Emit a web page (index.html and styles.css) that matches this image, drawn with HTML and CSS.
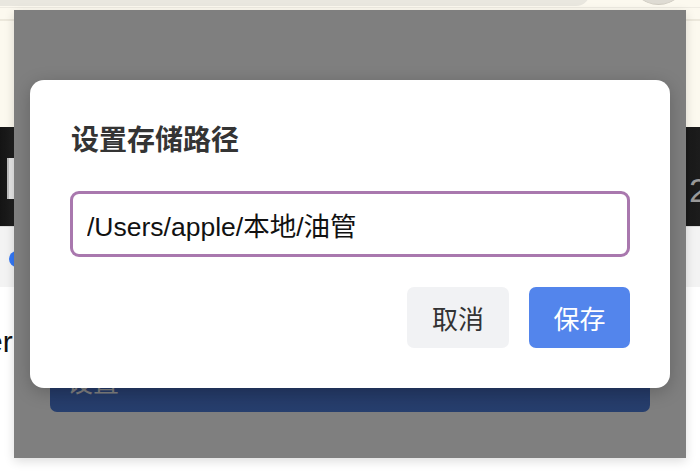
FILE: index.html
```html
<!DOCTYPE html>
<html lang="zh-CN">
<head>
<meta charset="utf-8">
<title>设置存储路径</title>
<link rel="stylesheet" href="styles.css">
</head>
<body>
<div class="page">
  <div class="chrome">
    <div class="urlbar"></div>
    <div class="round-btn"></div>
  </div>
  <div class="nav"><div class="nav-line"></div></div>
  <div class="hero">
    <div class="hero-chip"></div>
    <div class="hero-num">2</div>
  </div>
  <div class="tabs"><span class="tab-dot"></span></div>
  <div class="content"><span class="content-text">er</span></div>
</div>

<div class="window">
  <div class="window-body">
    <button class="primary-wide">设置</button>
  </div>
  <div class="overlay">
    <div class="dialog">
      <h2 class="dialog-title">设置存储路径</h2>
      <input class="path-input" type="text" value="/Users/apple/本地/油管">
      <div class="dialog-actions">
        <button class="btn btn-cancel">取消</button>
        <button class="btn btn-save">保存</button>
      </div>
    </div>
  </div>
</div>
</body>
</html>
```

FILE: styles.css
```css
* { box-sizing: border-box; }

html, body {
  margin: 0;
  padding: 0;
  width: 700px;
  height: 476px;
  overflow: hidden;
  background: #ffffff;
  font-family: "Liberation Sans", "Noto Sans CJK SC", sans-serif;
}

.page {
  display: flex;
  flex-direction: column;
  height: 476px;
}

.chrome {
  height: 8px;
  display: flex;
  align-items: flex-end;
  background: #fcf9ef;
  overflow: hidden;
  border-bottom: 1px solid #eeebe2;
}

.urlbar {
  width: 590px;
  height: 30px;
  background: #e9e7df;
  border-radius: 0 0 14px 0;
  align-self: flex-end;
  margin-bottom: 1px;
}

.round-btn {
  width: 57px;
  height: 57px;
  border-radius: 50%;
  background: #dedbd3;
  border-bottom: 1px solid #cfcbc1;
  margin-left: 40px;
  margin-bottom: 2px;
  flex: none;
}

.nav {
  height: 119px;
  background: #fcf9ef;
  padding-top: 11px;
}

.nav-line {
  height: 2px;
  background: #ece8dc;
}

.hero {
  height: 99px;
  background: linear-gradient(90deg, #141414, #262626 3%, #1a1a1a 6%, #151515 94%, #1c1c1c);
  display: flex;
  justify-content: space-between;
  align-items: center;
}

.hero-chip {
  width: 7px;
  height: 41px;
  margin-left: 7px;
  margin-top: 4px;
  background: #e4e4e4;
  border-left: 2px solid #bdbdbd;
}

.hero-num {
  color: #9a9a9a;
  font-size: 34px;
  line-height: 40px;
  margin-right: -8px;
  margin-top: 26px;
}

.tabs {
  height: 61px;
  background: #f3f3f3;
  padding-top: 24px;
  border-top: 1px solid #dcdcdc;
}

.tab-dot {
  display: block;
  width: 16px;
  height: 16px;
  border-radius: 50%;
  background: #3478f6;
  margin-left: 9px;
}

.content {
  flex: 1;
  background: #ffffff;
  padding-top: 38px;
}

.content-text {
  display: block;
  font-size: 30px;
  color: #111;
  margin-left: -14px;
}

.window {
  position: absolute;
  left: 14px;
  top: 10px;
  width: 672px;
  height: 448px;
  background: #ffffff;
  box-shadow: 0 3px 10px rgba(0, 0, 0, 0.14);
}

.window-body {
  height: 100%;
  display: flex;
  flex-direction: column;
  justify-content: flex-end;
  padding: 0 36px 46px;
}

.primary-wide {
  height: 64px;
  width: 100%;
  border: none;
  border-radius: 7px;
  background: linear-gradient(180deg, #4262b6, #4e7edc);
  color: #ffffff;
  font-family: "Noto Sans CJK SC", sans-serif;
  font-size: 26px;
  text-align: left;
  padding: 0 0 0 17px;
}

.overlay {
  position: absolute;
  inset: 0;
  background: rgba(0, 0, 0, 0.5);
  display: flex;
  align-items: center;
  justify-content: center;
}

.dialog {
  width: 640px;
  height: 308px;
  background: #ffffff;
  border-radius: 14px;
  padding: 40px;
  box-shadow: 0 4px 18px rgba(0, 0, 0, 0.22);
  display: flex;
  flex-direction: column;
}

.dialog-title {
  margin: 0;
  font-family: "Noto Sans CJK SC", sans-serif;
  font-size: 28px;
  line-height: 36px;
  font-weight: 700;
  color: #343434;
  padding-left: 1px;
}

.path-input {
  margin-top: 35px;
  height: 66px;
  width: 100%;
  border: 3px solid #a978ae;
  border-radius: 9px;
  padding: 0 14px;
  font-family: "Liberation Sans", "Noto Sans CJK SC", sans-serif;
  font-size: 26.5px;
  color: #111111;
  outline: none;
  background: #ffffff;
}

.dialog-actions {
  margin-top: 30px;
  display: flex;
  justify-content: flex-end;
  gap: 20px;
}

.btn {
  height: 61px;
  border: none;
  border-radius: 7px;
  padding: 0;
  white-space: nowrap;
  text-align: center;
  font-family: "Noto Sans CJK SC", sans-serif;
  font-size: 26px;
  line-height: 61px;
}

.btn-cancel {
  width: 102px;
  background: #f1f2f4;
  color: #333333;
}

.btn-save {
  width: 101px;
  background: #5385ec;
  color: #ffffff;
}
```
